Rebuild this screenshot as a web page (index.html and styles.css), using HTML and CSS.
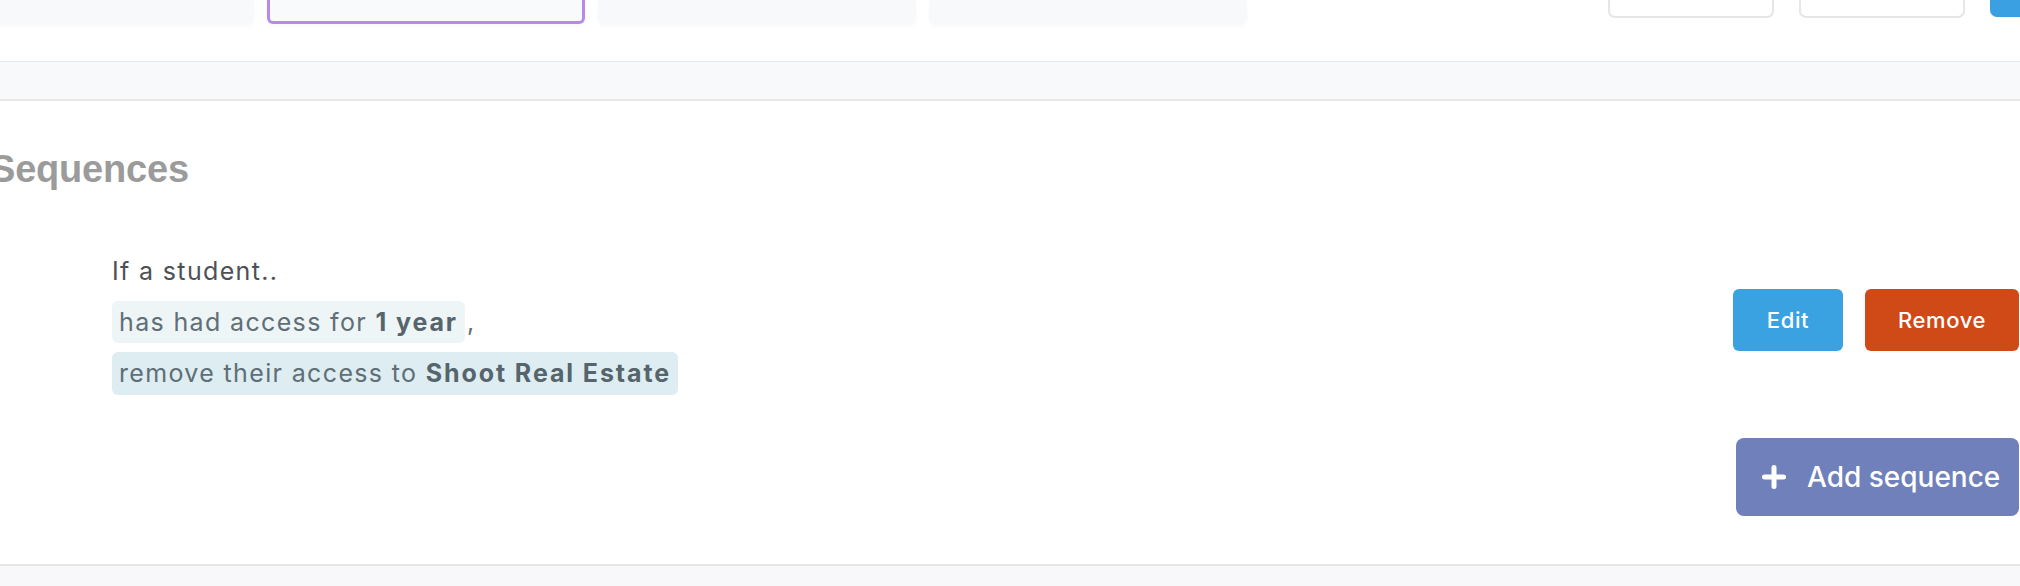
FILE: index.html
```html
<!DOCTYPE html>
<html lang="en">
<head>
<meta charset="utf-8">
<title>Sequences</title>
<link rel="stylesheet" href="styles.css">
</head>
<body>
<div class="page">
  <header class="topbar">
    <nav class="tabs">
      <div class="tab"></div>
      <div class="tab tab-active"></div>
      <div class="tab"></div>
      <div class="tab"></div>
    </nav>
    <div class="actions">
      <div class="ghost-btn"></div>
      <div class="ghost-btn"></div>
      <div class="blue-btn"></div>
    </div>
  </header>
  <div class="band"></div>
  <section class="section">
    <h2 class="heading">Sequences</h2>
    <div class="rule">
      <div class="rule-text">
        <div class="line">If a student..</div>
        <div class="line"><span class="chip chip-cond">has had access for <b>1 year</b></span><span class="comma">,</span></div>
        <div class="line"><span class="chip chip-act">remove their access to <b>Shoot Real Estate</b></span></div>
      </div>
      <div class="rule-buttons">
        <button class="btn btn-edit">Edit</button>
        <button class="btn btn-remove">Remove</button>
      </div>
    </div>
    <div class="add-row">
      <button class="btn-add">
        <svg class="plus" width="24" height="24" viewBox="0 0 24 24"><path d="M12 2.5v19M2.5 12h19" stroke="#fff" stroke-width="5" stroke-linecap="round" fill="none"/></svg>
        <span>Add sequence</span>
      </button>
    </div>
  </section>
  <div class="footer-band"></div>
</div>
</body>
</html>
```
FILE: styles.css
```css
html, body {
  margin: 0;
  padding: 0;
  background: #ffffff;
}
body {
  width: 2020px;
  height: 586px;
  overflow: hidden;
  font-family: Inter, "Noto Sans", "Liberation Sans", sans-serif;
}
.page {
  width: 2020px;
}
.topbar {
  height: 61px;
  display: flex;
  align-items: flex-start;
  justify-content: space-between;
  background: #fff;
}
.tabs {
  display: flex;
  gap: 13px;
  margin-left: -64px;
}
.tab {
  width: 318px;
  height: 24px;
  background: #f8f9fb;
  border-radius: 0 0 6px 6px;
  box-shadow: 0 3px 4px rgba(0, 0, 0, 0.025);
  box-sizing: border-box;
}
.tab-active {
  border: 3px solid #b68ae9;
  border-top: 0;
  border-radius: 0 0 6px 6px;
  background: #f9fafb;
}
.actions {
  display: flex;
  gap: 25px;
  margin-right: -136px;
}
.ghost-btn {
  width: 166px;
  height: 18px;
  box-sizing: border-box;
  border: 2px solid #e6e6e6;
  border-top: 0;
  border-radius: 0 0 7px 7px;
  background: #fff;
}
.blue-btn {
  width: 166px;
  height: 17px;
  background: #3ba0e2;
  border-radius: 0 0 7px 7px;
}
.band {
  height: 37px;
  background: #f8f9fb;
  border-top: 1px solid #e7eaef;
  border-bottom: 2px solid #e8e8e9;
}
.section {
  height: 465px;
  box-sizing: border-box;
  padding-top: 45px;
  border-bottom: 2px solid #e6e6e7;
  display: flex;
  flex-direction: column;
}
.heading {
  margin: 0 0 0 -10px;
  font-family: "Liberation Sans", Arial, sans-serif;
  font-weight: 700;
  font-size: 38px;
  line-height: 46px;
  letter-spacing: -0.2px;
  color: #9b9b9b;
}
.rule {
  margin-top: 58px;
  padding-left: 112px;
  display: flex;
  align-items: center;
  justify-content: space-between;
}
.rule-text {
  display: flex;
  flex-direction: column;
  gap: 9px;
  font-size: 25px;
  letter-spacing: 1.35px;
}
.line {
  height: 42px;
  line-height: 42px;
  color: #4d5155;
  white-space: nowrap;
}
.chip {
  display: inline-block;
  height: 42px;
  line-height: 42px;
  padding: 0 7px 0 7px;
  border-radius: 6px;
  color: #606e75;
}
.chip b {
  font-weight: 700;
  letter-spacing: 1.9px;
  color: #56646b;
}
.chip-cond {
  background: #eef5f7;
}
.chip-act {
  background: #ddedf2;
  height: 43px;
}
.comma {
  margin-left: 2px;
  color: #606e75;
}
.rule-buttons {
  display: flex;
  gap: 22px;
  margin-right: 1px;
  margin-bottom: 4px;
}
.btn {
  height: 62px;
  border: 0;
  border-radius: 6px;
  color: #fff;
  font-family: Inter, "Liberation Sans", sans-serif;
  font-size: 22px;
  font-weight: 500;
  letter-spacing: 0.6px;
  padding: 0;
}
.btn-edit {
  width: 110px;
  background: #3ba2e1;
}
.btn-remove {
  width: 154px;
  background: #d04a18;
}
.add-row {
  display: flex;
  justify-content: flex-end;
  margin-top: 44px;
  padding-right: 1px;
}
.btn-add {
  width: 283px;
  height: 78px;
  border: 0;
  border-radius: 8px;
  background: #6f80bb;
  color: #fff;
  display: flex;
  align-items: center;
  gap: 21px;
  padding: 0 0 0 26px;
  font-family: Inter, "Liberation Sans", sans-serif;
  font-size: 28px;
  font-weight: 500;
}
.plus {
  flex: none;
}
.footer-band {
  height: 20px;
  background: #f8f8fa;
}
```
